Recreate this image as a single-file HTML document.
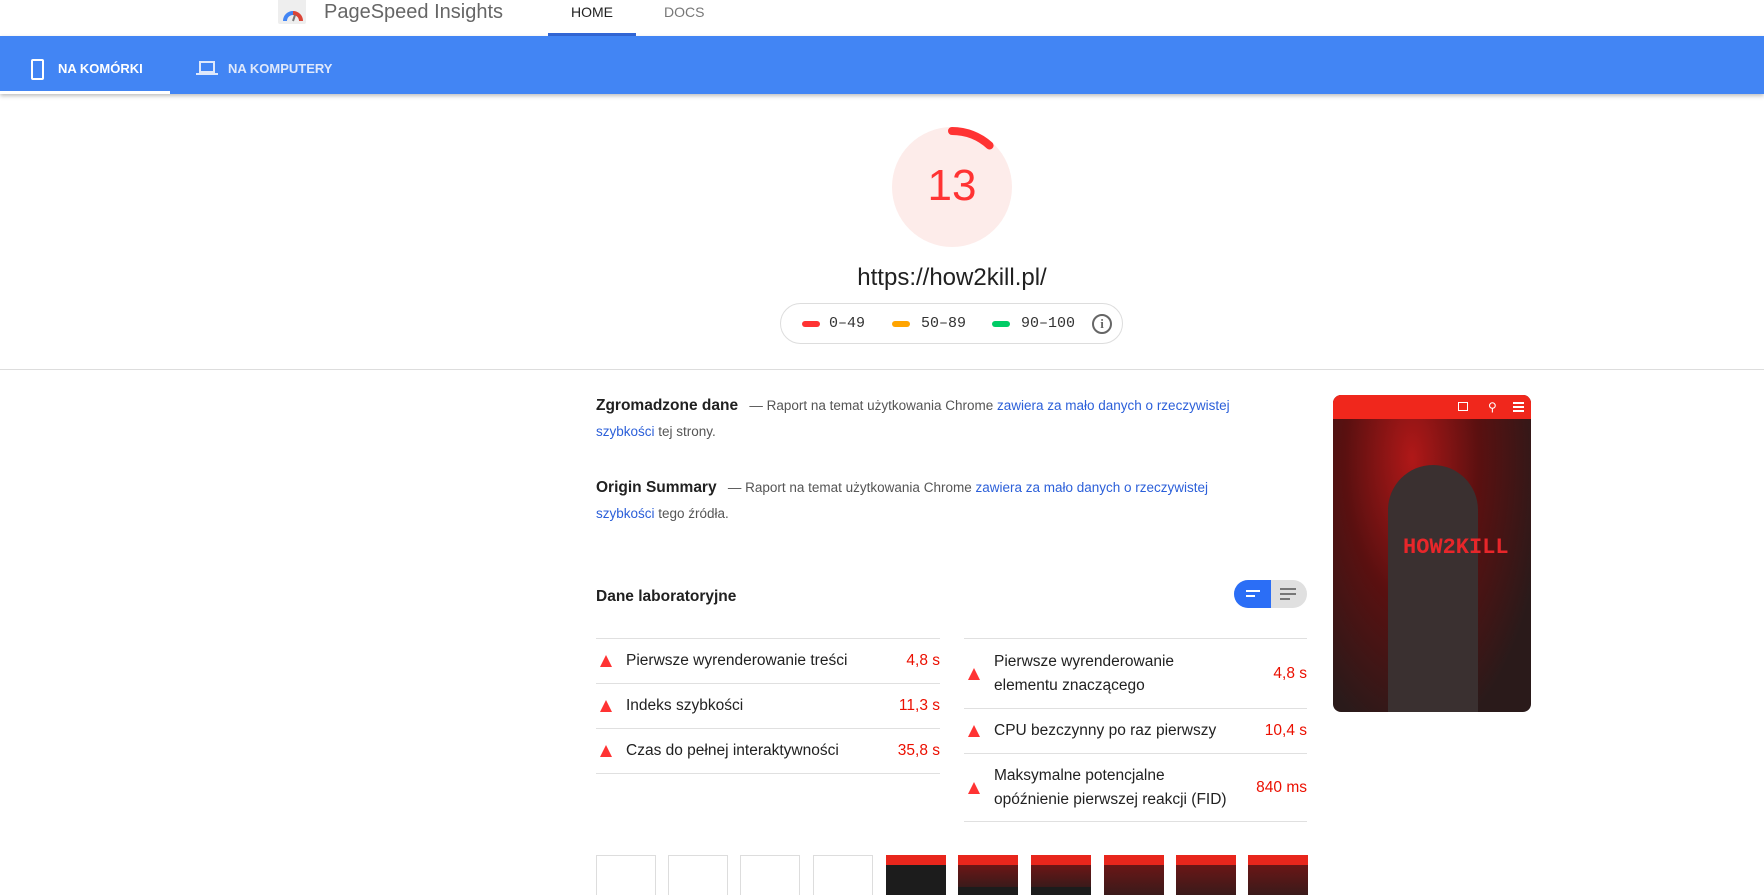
<!DOCTYPE html>
<html><head><meta charset="utf-8"><style>
*{margin:0;padding:0;box-sizing:border-box}
body{width:1764px;height:894px;overflow:hidden;background:#fff;font-family:"Liberation Sans",sans-serif;color:#212121;position:relative}
.a{position:absolute}
.link{color:#2b5fd9}
.row{position:absolute;border-top:1px solid #e0e0e0;display:flex;align-items:center;font-size:15.5px}
.tri{width:0;height:0;border-left:6px solid transparent;border-right:6px solid transparent;border-bottom:12px solid #f33;margin:0 14px 0 4px;flex:none}
.val{margin-left:auto;color:#eb0f00}
.th{position:absolute;top:855px;width:60px;height:40px;border:1px solid #ddd;border-bottom:none}
.thr{background:#1c1c1c;border:none}
.thr:before{content:"";position:absolute;left:0;top:0;right:0;height:10px;background:#e8261c}
</style></head><body>
<div class="a" style="left:278px;top:0;width:28px;height:24px;background:#eee;border-radius:0 0 2px 2px"></div>
<svg class="a" style="left:282px;top:6px" width="22" height="16" viewBox="0 0 22 16"><path d="M3 15 A8 8 0 0 1 11 7" stroke="#4285f4" stroke-width="4" fill="none"/><path d="M11 7 A8 8 0 0 1 19 15" stroke="#db4437" stroke-width="4" fill="none"/><path d="M11 15 L13 9" stroke="#777" stroke-width="2"/></svg>
<div class="a" style="left:324px;top:0;font-size:20px;color:#666;line-height:24px">PageSpeed Insights</div>
<div class="a" style="left:548px;top:0;width:88px;text-align:center;font-size:14px;line-height:24px;color:#222">HOME</div>
<div class="a" style="left:548px;top:33px;width:88px;height:3px;background:#3367d6"></div>
<div class="a" style="left:664px;top:0;font-size:14px;line-height:24px;color:#777">DOCS</div>
<div class="a" style="left:0;top:36px;width:1764px;height:58px;background:#4285f4;box-shadow:0 2px 4px rgba(0,0,0,.25)"></div>
<div class="a" style="left:31px;top:59px;width:13px;height:21px;border:2px solid #fff;border-radius:2px"></div>
<div class="a" style="left:58px;top:61px;font-size:13px;font-weight:bold;color:#fff">NA KOMÓRKI</div>
<div class="a" style="left:0;top:91px;width:170px;height:3px;background:#fff"></div>
<div class="a" style="left:199px;top:61px;width:16px;height:12px;border:2px solid #dfe8fb"></div>
<div class="a" style="left:196px;top:73px;width:22px;height:2px;background:#dfe8fb"></div>
<div class="a" style="left:228px;top:61px;font-size:13px;font-weight:bold;color:#dfe8fb">NA KOMPUTERY</div>
<svg class="a" style="left:888px;top:123px" width="128" height="128" viewBox="0 0 128 128"><circle cx="64" cy="64" r="60" fill="#fdecea"/><path d="M64 8 A56 56 0 0 1 101.6 22.5" stroke="#f33" stroke-width="8" fill="none" stroke-linecap="round"/></svg>
<div class="a" style="left:888px;top:161px;width:128px;text-align:center;font-size:44px;color:#f33;line-height:50px">13</div>
<div class="a" style="left:752px;top:264px;width:400px;text-align:center;font-size:24px;color:#212121;line-height:28px">https://how2kill.pl/</div>
<div class="a" style="left:780px;top:303px;width:343px;height:41px;border:1px solid #ddd;border-radius:21px;font-family:'Liberation Mono',monospace;font-size:15px;color:#333;line-height:39px">
<span class="a" style="left:21px;top:17px;width:18px;height:6px;border-radius:3px;background:#f33"></span><span class="a" style="left:48px">0–49</span>
<span class="a" style="left:111px;top:17px;width:18px;height:6px;border-radius:3px;background:#ffa400"></span><span class="a" style="left:140px">50–89</span>
<span class="a" style="left:211px;top:17px;width:18px;height:6px;border-radius:3px;background:#0c6"></span><span class="a" style="left:240px">90–100</span>
<span class="a" style="left:311px;top:10px;width:20px;height:20px;border:2px solid #666;border-radius:50%;font-family:'Liberation Serif',serif;font-size:13px;line-height:16px;text-align:center;color:#666;font-weight:bold">i</span></div>
<div class="a" style="left:0;top:369px;width:1764px;height:1px;background:#ddd"></div>
<div class="a" style="left:596px;top:393px;width:680px;font-size:13.5px;line-height:26px;color:#555"><b style="font-size:15.5px;color:#212121">Zgromadzone dane</b> &nbsp; — Raport na temat użytkowania Chrome <span class="link">zawiera za mało danych o rzeczywistej szybkości</span> tej strony.</div>
<div class="a" style="left:596px;top:475px;width:660px;font-size:13.5px;line-height:26px;color:#555"><b style="font-size:15.5px;color:#212121">Origin Summary</b> &nbsp; — Raport na temat użytkowania Chrome <span class="link">zawiera za mało danych o rzeczywistej szybkości</span> tego źródła.</div>
<div class="a" style="left:596px;top:588px;font-size:15.5px;font-weight:bold;color:#212121">Dane laboratoryjne</div>
<div class="a" style="left:1234px;top:580px;width:73px;height:28px;border-radius:14px;background:#e0e0e0;overflow:hidden"><div style="width:37px;height:28px;background:#2b6ef6"></div></div>
<div class="a" style="left:1246px;top:590px;width:14px;height:2px;background:#fff"></div><div class="a" style="left:1246px;top:595px;width:9px;height:2px;background:#fff"></div>
<div class="a" style="left:1280px;top:588px;width:16px;height:2px;background:#777"></div><div class="a" style="left:1280px;top:593px;width:16px;height:2px;background:#777"></div><div class="a" style="left:1280px;top:598px;width:10px;height:2px;background:#777"></div>
<div class="row" style="left:596px;top:638px;width:344px;height:45px"><i class="tri"></i>Pierwsze wyrenderowanie treści<span class="val">4,8 s</span></div>
<div class="row" style="left:596px;top:683px;width:344px;height:45px"><i class="tri"></i>Indeks szybkości<span class="val">11,3 s</span></div>
<div class="row" style="left:596px;top:728px;width:344px;height:45px"><i class="tri"></i>Czas do pełnej interaktywności<span class="val">35,8 s</span></div>
<div class="a" style="left:596px;top:773px;width:344px;height:1px;background:#e0e0e0"></div>
<div class="row" style="left:964px;top:638px;width:343px;height:70px;line-height:24px"><i class="tri"></i><span>Pierwsze wyrenderowanie<br>elementu znaczącego</span><span class="val">4,8 s</span></div>
<div class="row" style="left:964px;top:708px;width:343px;height:45px"><i class="tri"></i>CPU bezczynny po raz pierwszy<span class="val">10,4 s</span></div>
<div class="row" style="left:964px;top:753px;width:343px;height:68px;line-height:24px"><i class="tri"></i><span>Maksymalne potencjalne<br>opóźnienie pierwszej reakcji (FID)</span><span class="val">840 ms</span></div>
<div class="a" style="left:964px;top:821px;width:343px;height:1px;background:#e0e0e0"></div>
<div class="a" style="left:1333px;top:395px;width:198px;height:317px;border-radius:8px;overflow:hidden;background:radial-gradient(ellipse at 40% 20%,#b01818 0%,#5a1010 40%,#2a1a1a 80%)">
<div style="height:24px;background:#f0271c"></div>
<div class="a" style="left:55px;top:70px;width:90px;height:250px;border-radius:45px 45px 0 0;background:#3a3030"></div>
<div class="a" style="left:70px;top:140px;font-size:22px;font-weight:bold;color:#e8262a;font-family:'Liberation Mono',monospace">HOW2KILL</div>
<div class="a" style="left:125px;top:7px;width:10px;height:9px;border:1.5px solid #fff"></div>
<div class="a" style="left:155px;top:5px;color:#fff;font-size:12px">&#9906;</div>
<div class="a" style="left:180px;top:7px;width:11px;height:2px;background:#fff;box-shadow:0 4px 0 #fff,0 8px 0 #fff"></div>
</div>
<div class="th" style="left:596px"></div><div class="th" style="left:668px"></div><div class="th" style="left:740px"></div><div class="th" style="left:813px"></div>
<div class="th thr" style="left:886px"></div>
<div class="th thr" style="left:958px;background:linear-gradient(#1c1c1c,#7a1515 10%,#3a1a1a 80%,#1c1c1c 80%)"></div>
<div class="th thr" style="left:1031px;background:linear-gradient(#1c1c1c,#7a1515 10%,#3a1a1a 80%,#1c1c1c 80%)"></div>
<div class="th thr" style="left:1104px;background:linear-gradient(#7a1515,#3a1a1a)"></div>
<div class="th thr" style="left:1176px;background:linear-gradient(#7a1515,#3a1a1a)"></div>
<div class="th thr" style="left:1248px;background:linear-gradient(#7a1515,#3a1a1a)"></div>
</body></html>
